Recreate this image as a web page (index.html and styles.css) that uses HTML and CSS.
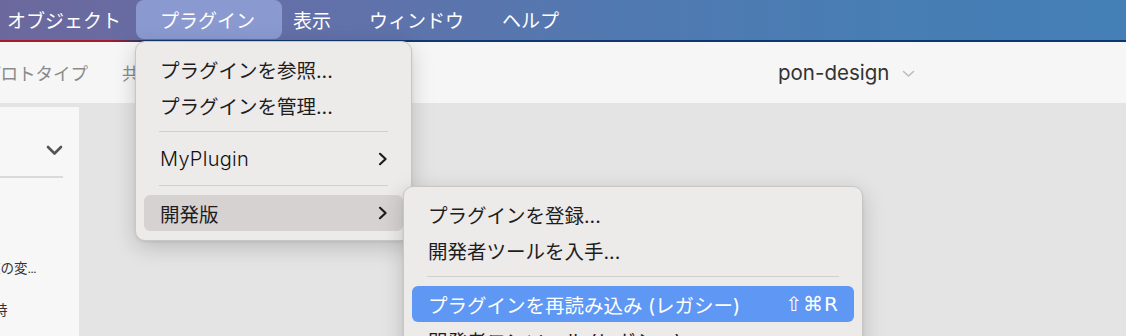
FILE: index.html
```html
<!DOCTYPE html>
<html lang="ja">
<head>
  <meta charset="UTF-8">
  <meta name="viewport" content="width=device-width, initial-scale=1">
  <title>プラグイン メニュー</title>
  <link rel="stylesheet" href="styles.css">
</head>
<body>

<div class="menubar">
  <span class="menubar-item">オブジェクト</span>
  <span class="menubar-item active">プラグイン</span>
  <span class="menubar-item">表示</span>
  <span class="menubar-item">ウィンドウ</span>
  <span class="menubar-item">ヘルプ</span>
</div>
<div class="menubar-line"></div>

<div class="toolbar">
  <span class="tab tab-cut">プロトタイプ</span>
  <span class="tab">共有</span>
  <span class="project">
    pon-design
    <svg class="project-caret" width="13" height="8" viewBox="0 0 13 8">
      <path d="M1.5 1.5 L6.5 6 L11.5 1.5" fill="none" stroke="#bdbdbd" stroke-width="1.6" stroke-linecap="round" stroke-linejoin="round"/>
    </svg>
  </span>
</div>

<div class="workspace">
  <div class="sidebar">
    <div class="sidebar-head">
      <svg width="17" height="11" viewBox="0 0 17 11">
        <path d="M2 2 L8.5 8.5 L15 2" fill="none" stroke="#555" stroke-width="2.6" stroke-linecap="round" stroke-linejoin="round"/>
      </svg>
    </div>
    <div class="sidebar-divider"></div>
    <div class="sidebar-row row-first">値の変…</div>
    <div class="sidebar-row row-second">時</div>
  </div>
</div>

<!-- Plugins menu -->
<div class="menu menu-plugins">
  <div class="menu-row">プラグインを参照...</div>
  <div class="menu-row">プラグインを管理...</div>
  <div class="menu-sep"></div>
  <div class="menu-row">
    <span class="latin">MyPlugin</span>
    <svg class="chev" width="10" height="14" viewBox="0 0 10 14">
      <path d="M2 1.8 L7.6 7 L2 12.2" fill="none" stroke="#1d1d1d" stroke-width="2.2" stroke-linecap="round" stroke-linejoin="round"/>
    </svg>
  </div>
  <div class="menu-sep"></div>
  <div class="menu-row hover">
    <span>開発版</span>
    <svg class="chev" width="10" height="14" viewBox="0 0 10 14">
      <path d="M2 1.8 L7.6 7 L2 12.2" fill="none" stroke="#1d1d1d" stroke-width="2.2" stroke-linecap="round" stroke-linejoin="round"/>
    </svg>
  </div>
</div>

<!-- Development submenu -->
<div class="menu menu-dev">
  <div class="menu-row">プラグインを登録...</div>
  <div class="menu-row">開発者ツールを入手...</div>
  <div class="menu-sep"></div>
  <div class="menu-row selected">
    <span>プラグインを再読み込み (レガシー)</span>
    <span class="shortcut">⇧⌘R</span>
  </div>
  <div class="menu-row">開発者コンソール (レガシー)</div>
</div>

</body>
</html>
```

FILE: styles.css
```css
body {
  margin: 0;
  width: 1126px;
  height: 336px;
  overflow: hidden;
  font-family: "Inter", "Noto Sans CJK JP", sans-serif;
  background: #e4e4e4;
  position: relative;
}
.menubar {
  height: 40px;
  display: flex;
  align-items: center;
  gap: 38px;
  padding-left: 7px;
  background: linear-gradient(90deg, #6c689d 0%, #6271aa 30%, #5179b1 55%, #477eb4 80%, #447fb5 100%);
  font-family: "Noto Sans CJK JP", sans-serif;
  font-size: 19px;
  color: #fff;
}
.menubar-item {
  line-height: 40px;
  white-space: nowrap;
}
.menubar-item:nth-child(2) {
  margin-left: 1px;
}
.menubar-item.active {
  padding: 0 27px 0 24px;
  margin: -1px -27px 0 -23px;
  height: 39px;
  line-height: 39px;
  background: #8a9ad0;
  border-radius: 8px;
}
.menubar-line {
  height: 2px;
  background: linear-gradient(90deg, #a51d2b 0%, #a51d2b 110px, #123a6c 150px, #0c3470 100%);
}
.toolbar {
  height: 61px;
  display: flex;
  align-items: center;
  background: #f6f6f6;
  font-family: "Noto Sans CJK JP", sans-serif;
  font-size: 17.5px;
  color: #8a8a8a;
  white-space: nowrap;
}
.tab-cut {
  margin-left: -17px;
}
.tab + .tab {
  margin-left: 34px;
}
.project {
  margin-left: 621px;
  display: flex;
  align-items: center;
  gap: 13px;
  font-family: "Inter", sans-serif;
  font-size: 20.5px;
  color: #333;
}
.project-caret {
  margin-top: 2px;
}
.workspace {
  height: 233px;
  padding-top: 4px;
  box-sizing: border-box;
}
.sidebar {
  width: 79px;
  height: 100%;
  background: #f7f7f7;
  overflow: hidden;
  font-family: "Roboto", "Noto Sans CJK JP", sans-serif;
  font-size: 13.5px;
  color: #333;
}
.sidebar-head {
  height: 69px;
  display: flex;
  justify-content: flex-end;
  align-items: flex-start;
  padding-top: 38px;
  padding-right: 16px;
  box-sizing: border-box;
}
.sidebar-divider {
  width: 63px;
  height: 2px;
  background: #dadada;
}
.sidebar-row {
  line-height: 20px;
  white-space: nowrap;
}
.row-first {
  margin-top: 80px;
  margin-left: -13px;
}
.row-second {
  margin-top: 22px;
  margin-left: -6px;
}
.menu {
  position: absolute;
  box-sizing: border-box;
  padding: 9px 8px;
  background: #edeaea;
  border: 1px solid #c9c6c6;
  border-radius: 10px;
  box-shadow: 0 6px 22px rgba(0, 0, 0, 0.18), 0 1px 3px rgba(0, 0, 0, 0.08);
  font-size: 19.5px;
  color: #1d1d1d;
}
.menu-plugins {
  left: 135px;
  top: 41px;
  width: 277px;
}
.menu-dev {
  left: 403px;
  top: 186px;
  width: 460px;
}
.menu-row {
  height: 36px;
  display: flex;
  align-items: center;
  justify-content: space-between;
  padding: 0 15px 0 16px;
  border-radius: 6px;
  white-space: nowrap;
}
.menu-row .latin {
  font-size: 20px;
  font-weight: 300;
  letter-spacing: 0.3px;
  color: #111;
}
.menu-row.hover {
  background: #d6d2d2;
}
.menu-row.selected {
  background: #5e97f4;
  color: #fff;
}
.menu-sep {
  height: 1px;
  margin: 8px 15px 9px;
  background: #d2cfcf;
}
.shortcut {
  font-family: "DejaVu Sans", sans-serif;
  font-size: 20px;
  letter-spacing: 1px;
}
```
